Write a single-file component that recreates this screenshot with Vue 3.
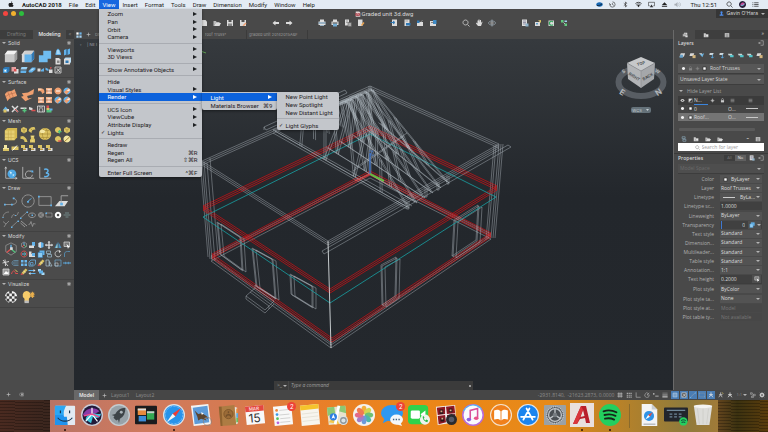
<script setup>
import { h, ref } from 'vue'

/* Small glyphs: each is a list of [path, fill, stroke, stroke width] on a 16 x 16 grid. */
const W = '#dcdcdc', G = '#a9a9a9', B = '#62b2ea', D = '#2f78b4', O = '#f0a070', Y = '#dcc463', L = '#f3e6a2', R = '#dc5050', N = '#54c27c', C = '#54c6cc', K = '#3a3a3a'
const glyphs = {
  box: [['M4 2h11v9l-3 4H1V6z', '#c8c8c8'], ['M4 2h11l-3 4H1z', '#f2f2f2'], ['M15 2v9l-3 4V6z', '#9c9c9c']],
  boxBlue: [['M4 2h11v9l-3 4H1V6z', '#dadada'], ['M4 6h8v9H4z', B], ['M5 2h10l-3 4H3z', '#cfcfcf'], ['M15 2v9l-3 4V6z', D]],
  union: [['M6 2h9v9h-4v4H1V7h5z', '#6fbcf0']],
  cone: [['M5 4l3-3 3 3 3 7v3H3v-3z', B], ['M6 4h4l2 8H5z', '#a8d8f6']],
  slabs: [['M2 4l5-2v11l-5 2zM9 3l5-2v11l-5 2z', B], ['M7 2l2 1v11l-2 1z', D]],
  page: [['M3 2h7l3 3v10H3z', W], ['M6 7h5v5H6z', '#888']],
  shellBox: [['M2 4h12v11H2z', W], ['M5 7h6v5H5z', D], ['M2 4l3-3h11v9l-2 3V4z', '#b9dcf2']],
  cubeBlue: [['M2 5l4-3h9v8l-4 4H2z', D], ['M3 6h7v7H3z', B], ['M5 8h3v3H5z', '#fff']],
  subtract: [['M1 2h9v9H1z', '#e4a0a0'], ['M6 6h9v9H6z', W], ['M6 6h5v5H6z', R]],
  slice: [['M3 2h12l-2 5H1z', '#9bd2f5'], ['M1 9h12l-1 5H1z', B]],
  wedge: [['M1 10l7-7h7v4l-7 6H2z', B], ['M4 9l5-4h4l-5 4z', '#bfe3f8']],
  mix: [['M1 5h6v6H1z', W], ['M8 8l6-4v7h-6z', B]],
  mixRed: [['M1 3l6 3v4L1 8z', B], ['M8 7h7v7H8z', W], ['M10 2l4 1-3 4z', R]],
  cut: [['M2 2h12v12H2z', '#555', W, 1.5], ['M4 13L13 4M6 5l6 7', 'none', W, 2]],
  patch: [['M1 7C4 2 8 5 12 1l3 8c-5 2-8 1-11 6z', O], ['M4 4l4 9M8 4l3 7M2 10c4-4 7-3 12-5', 'none', '#b5694a', 0.7]],
  planar: [['M1 6l7-1 7-4-1 6-7 2 1 3 5-1-8 4-5-5 3-1z', O]],
  arcO: [['M2 3h7c4 0 6 3 6 8l-5 3c0-4-2-6-5-6l-3 1z', O], ['M2 3h7v3H2z', '#f8cfae']],
  boxO: [['M2 2h12v12H2z', '#f3b48c'], ['M5 5h6v6H5z', '#fff'], ['M2 7h12v2H2z', '#bb6a43']],
  ballO: [['M8 1a7 7 0 1 0 .1 0z', O], ['M4 8h8', 'none', '#fff', 2]],
  ballMix: [['M8 1a7 7 0 1 0 .1 0z', B], ['M2 10l9-8 4 4-8 9z', O], ['M7 7l6-3v4z', '#fff']],
  tools: [['M2 2l12 12M14 2L2 14', 'none', W, 3], ['M8 8l6 6', 'none', R, 2]],
  plusN: [['M1 5h12v3H1z', W], ['M9 7v8M5 11h8', 'none', N, 3]],
  minusR: [['M2 4l7 2v5l-7-2z', W], ['M7 11h8', 'none', R, 3]],
  grid: [['M1 2h14v12H1z', '#555', W, 1.6], ['M5 2c4 5-3 7 0 12M11 2c-4 5 3 7 0 12', 'none', W, 1.6]],
  hue: [['M3 1h5v5H3z', R], ['M3 6h6v4H3z', Y], ['M3 10h10v5H3z', N], ['M9 7h6v4H9z', B]],
  gearBall: [['M1 11l6-8 7 8z', B], ['M3 9h6v6H3z', Y], ['M9 8h5v5H9z', W]],
  meshBox: [['M1 4l3-3h11v11l-3 3H1z', '#d3b74f'], ['M1 4h11v11H1z', '#e6cf72'], ['M1 8h11M1 12h11M5 4v11M8 4v11', 'none', '#c4a748', 0.6]],
  meshSmall: [['M2 5l5-3 7 3v6l-6 4-6-4z', Y], ['M8 8v6M3 5l5 3 5-3', 'none', '#8f7630', 1]],
  meshArc: [['M1 10C2 4 7 1 13 2l2 5c-6 0-8 2-8 7z', Y], ['M5 5l5 5', 'none', '#8f7630', 1]],
  meshFan: [['M1 3l5-1c3 1 8 6 9 12H9C9 9 6 7 1 8z', Y]],
  meshTube: [['M5 1h8l-1 5 2 3v6H4v-5l2-3z', Y], ['M7 3h4M7 12h4', 'none', L, 1.5]],
  meshBall: [['M8 1a7 7 0 1 0 .1 0z', '#dcc260'], ['M8 1c-4 3-4 11 0 14M8 1c4 3 4 11 0 14M1 8h14M3 4h10M3 12h10', 'none', '#9c8132', 0.6], ['M5 3a3 2 0 1 0 .1 0z', L]],
  ballPlus: [['M8 2a6 6 0 1 0 .1 0z', Y], ['M11 8v7M8 11h7', 'none', N, 2.5]],
  ballMinus: [['M8 2a6 6 0 1 0 .1 0z', Y], ['M8 12h7', 'none', R, 2.5]],
  ballPen: [['M8 1a7 7 0 1 0 .1 0z', L], ['M3 13L13 4', 'none', '#a08638', 2]],
  meshUp: [['M4 2h6v6h4v6H2V8h2z', L], ['M2 10h12v4H2z', Y]],
  meshTrim: [['M1 5h14v7H1z', Y], ['M3 13L12 3', 'none', '#fff', 2]],
  meshStep: [['M2 2h8v6H2z', Y], ['M6 8h9v6H6z', W], ['M6 9h6v3H6z', '#c29d40']],
  ucsWorld: [['M2 1v13h13', 'none', '#b8b8b8', 1], ['M1 3l1-2 1 2M13 13l2 1-2 1', 'none', '#d8d8d8', 0.8], ['M9 4a5 5 0 1 0 .1 0z', '#4fa8e4'], ['M6 6l3 1-1 3zM10 9l2 1-2 2z', '#d5edf8']],
  ucsTurn: [['M2 1v13h13', 'none', '#b8b8b8', 1], ['M12 7a4 4 0 1 0 1 3', 'none', '#b8b8b8', 1], ['M10 5h4v3z', B]],
  ucsThree: [['M2 1v13h13', 'none', '#b8b8b8', 1], ['M7 4c5-2 6 3 2 4 5 0 4 5-2 4', 'none', B, 1.7]],
  pline: [['M1 12h9c6-1 5-6 1-7', 'none', '#9a9a9a', 1], ['M0 11h2v2H0zM8 11h2v2H8zM10 4h2v2h-2z', B]],
  circle: [['M8 1a7 7 0 1 0 .1 0z', 'none', '#999', 1], ['M7 9l5-4', 'none', B, 1], ['M7 8h2v2H7z', B]],
  rect: [['M1 3h14v10H1z', 'none', '#999', 1], ['M0 2h2v2H0zM14 12h2v2h-2z', B]],
  plane: [['M5 8h10l-4 6H0z', W], ['M7 2v9M7 2h8', 'none', '#aaa', 1], ['M6 10h3v3H6z', B]],
  arc: [['M2 14C2 6 7 2 14 2', 'none', G, 1.2], ['M1 12h2v2H1z', B]],
  spline: [['M1 14C5-3 9 20 15 2', 'none', G, 1.2], ['M8 8h2v2H8z', B]],
  line: [['M1 14L14 2', 'none', G, 1.2], ['M0 13h3v3H0zM13 1h3v3h-3z', B]],
  ellipse: [['M8 4c9 0 9 9 0 9S-1 4 8 4z', 'none', G, 1.5], ['M7 7h3v3H7z', B]],
  hatch: [['M8 2a6 6 0 1 0 .1 0z', '#8a8a8a'], ['M4 5l8 8M4 11l7-7', 'none', '#444', 1]],
  rectS: [['M2 4h12v8H2z', 'none', G, 1.2], ['M1 3h3v3H1z', B]],
  donut: [['M8 3.500a4.500 4.500 0 1 0 .1 0z', 'none', '#fff', 4]],
  divide: [['M1 8h14M4 4h8M5 12h6', 'none', '#8aa', 1.3]],
  angle: [['M2 3l6 5 6-6M8 8l-4 6', 'none', G, 1.2]],
  parallel: [['M2 2l12 10M1 6l9 8', 'none', G, 1.6]],
  zig: [['M1 9l3-1 2-5 3 10 2-6 4 1', 'none', G, 1.3]],
  gizmo: [['M8 1l6 3v7l-6 4-6-4V4z', 'none', '#8d8d8d', 1], ['M8 8V3', 'none', B, 1.6], ['M8 8l-5 4', 'none', R, 1.6], ['M8 8l5 4', 'none', N, 1.6], ['M7 6h3v3H7z', '#ddd']],
  gizmoR: [['M8 2l5 3v6l-5 3-5-3V5z', 'none', '#bbb', 1], ['M8 8V3', 'none', B, 2], ['M8 8l-4 4', 'none', R, 2], ['M8 8l4 4', 'none', N, 2]],
  rotate3: [['M8 2a6 6 0 1 0 .1 0z', 'none', R, 1.8], ['M8 4c4 2 4 6 0 8', 'none', N, 1.6], ['M4 8h8', 'none', B, 2]],
  alignTop: [['M8 2h6v8H8z', B], ['M2 9h10v5H2z', W]],
  drum: [['M3 4l5-2 5 2v8l-5 2-5-2z', B], ['M3 4l5-2v12l-5-2z', W]],
  move: [['M8 1v14M1 8h14', 'none', W, 2.5], ['M8 0l3 3H5zM8 16l3-3H5zM0 8l3-3v6zM16 8l-3-3v6z', W]],
  mirror: [['M7 2v12H1zM9 2l6 12H9z', '#4b90c0'], ['M7 5v9H3z', '#9cc']],
  mouse: [['M2 2h11v9H2z', '#777', W, 1.4], ['M7 6l7 6-3 1-1 3z', '#fff']],
  fillet: [['M2 3h5v5h7v6H2z', W], ['M8 6h6v6H8z', B]],
  copyBlue: [['M5 1h10v9H5z', B], ['M2 5h9v10H2z', '#8fccf2', D, 1]],
  copy: [['M3 2h8v5H3zM5 9h8v5H5z', 'none', '#9bbfd4', 1.4]],
  spin: [['M12 3a6 6 0 1 0 2 6', 'none', W, 1.5], ['M10 0l4 3-4 3z', W]],
  corner: [['M3 14V8c0-3 2-5 6-5h5', 'none', '#5796bf', 1.6]],
  trim: [['M2 2l10 12M6 1l1 13M1 8l13-3', 'none', W, 1.8]],
  offset: [['M15 3H8C0 3 0 13 8 13h7M15 6H8c-4 0-4 4 0 4h7', 'none', '#6c9dbd', 1.4]],
  array: [['M2 2h5v5H2zM9 2h5v5H9zM2 9h5v5H2zM9 9h5v5H9z', '#6db8ec']],
  array3: [['M2 6l4-4h9v8l-4 4H2z', 'none', '#69aee0', 1.6], ['M5 7h5v5H5z', 'none', '#69aee0', 1.4]],
  pencil: [['M3 10l8-9 4 3-8 9z', Y], ['M1 14l2-4 4 3z', R], ['M7 6l4 3', 'none', '#fff', 1]],
  stretch: [['M2 2h6v12H2zM9 5l5 9H9z', 'none', '#a9c4d3', 1.4]],
  scale: [['M2 2h12v12H2z', 'none', '#6ba8cf', 1.4], ['M2 8h6v6H2z', 'none', '#ccc', 1.2]],
  join: [['M0 8h6M10 8h6', 'none', '#5ba8dd', 2], ['M5 5l3 3-3 3zM11 5L8 8l3 3z', B]],
  photo: [['M2 2h12v12H2z', '#999', W, 1.5], ['M4 11l4-5 3 3 2-2v5H4z', '#fff']],
  wave: [['M1 12C3 4 8 4 9 11h5', 'none', R, 2], ['M8 3l5 5', 'none', Y, 2]],
  swap: [['M1 5h11M4 11h11', 'none', B, 2], ['M11 2l4 3-4 3zM5 8l-4 3 4 3z', W]],
  pair: [['M2 2h6v5H2zM9 9h6v5H9z', '#aadcf8'], ['M4 5h8v6H4z', B]],
  checker: [['M8 1a7 7 0 1 0 .1 0z', '#f5f5f5'], ['M6 1h3v3H6zM3 4h3v3H3zM9 4h3v3H9zM6 7h3v3H6zM12 7h3v3h-3zM1 7h2v3H1zM3 10h3v3H3zM9 10h3v3H9zM6 13h3v2H6z', '#3f3f3f']],
  bulb: [['M6 1a5 5 0 0 1 3 9v3H4v-3A5 5 0 0 1 6 1z', '#f6cb6a'], ['M4 12h5v3H4z', '#bdbdbd'], ['M13 2v7M9.500 5.500h6M11 3l4 5M15 3l-4 5', 'none', '#eab04c', 1.2]],

  fileNew: [['M4 2h7l3 3v9H4z', W]],
  open: [['M1 4h5l1 2h6v2H5l-3 6H1z', '#bbb'], ['M5 8h11l-3 6H2z', W]],
  save: [['M2 2h12v12H2z', W], ['M5 2h6v4H5z', '#555'], ['M4 9h8v5H4z', '#888']],
  saveAs: [['M2 2h12v12H2z', W], ['M5 2h6v4H5z', '#555'], ['M7 13l6-6 2 2-5 5z', O]],
  undo: [['M1 8l6-5v3h7v4H7v3z', W]],
  redo: [['M15 8L9 3v3H2v4h7v3z', W]],
  print: [['M4 1h8v4H4zM1 5h14v7H1zM4 9h8v5H4z', '#dedede'], ['M1 7h14v2H1zM4 12h8v1H4z', '#5583a8']],
  printB: [['M4 1h8v4H4zM1 5h14v7H1z', '#dedede'], ['M4 9h8v6H4z', '#72acd4'], ['M3 7h10v2H3z', '#444']],
  sheet: [['M2 1h8v12H2z', W], ['M4 4h4M4 7h4', 'none', '#666', 1], ['M8 7h7v8H8z', '#aaa', '#555', 1]],
  sheetPen: [['M2 1h9v13H2z', W], ['M8 12l5-6 2 2-5 6z', '#f0a44c']],
  importA: [['M4 1h10v13H4z', W], ['M1 7h7M6 4l4 3-4 3', 'none', D, 2]],
  importB: [['M3 1h10v13H3z', W], ['M6 8h9v5H6z', D], ['M5 4h5', 'none', '#777', 1]],
  importC: [['M2 6h12v8H2z', W], ['M2 3h5v5H2z', D], ['M9 6l4-3', 'none', W, 1]],
  importD: [['M2 4h12v10H2z', W], ['M8 2h7v8H8z', '#3f8cc7'], ['M4 7h5', 'none', '#666', 1.5]],
  zoom: [['M7 2a5 5 0 1 0 .1 0zM11 11l4 4', 'none', '#ccc', 1.7]],
  hand: [['M3 7l2 2V3h2v4V1h2v6l1-5h2v6l2-3 1 1-3 8H6L2 9z', W]],
  orbit: [['M8 4v8M4 8h8', 'none', '#ccc', 1.2], ['M8 4c9 0 9 8 0 8S-1 4 8 4zM8 1v3M8 12v3', 'none', '#a8b8c4', 1.4]],
  prop: [['M2 1h10v13H2z', W], ['M4 4h6M4 7h6M4 10h6', 'none', '#668', 1.2], ['M9 9h6v6H9z', '#90b4cc']],
  blocks: [['M2 6h10v8H2z', W], ['M8 3l6-1v6z', Y], ['M4 8h4v3H4z', '#5f9fc8']],
  refresh: [['M3 3h11v11H3z', W], ['M12 6a4 4 0 1 0 0 5', 'none', '#38a860', 2.4]],
  link: [['M2 2h5v5H2zM9 9h5v5H9z', '#63cb80'], ['M9 3h5v3H9z', '#9fd1ef'], ['M7 7l3 3', 'none', W, 1.5]],

  layer: [['M4 3h10l-3 8H1z', '#d8d8d8'], ['M3 6h6v7H1z', '#66a0c8']],
  layerY: [['M3 3h9l-2 6H1z', '#d8d8d8'], ['M8 7h7v7H8z', '#d2b47c']],
  layerB: [['M2 3l5 2 7-2-4 9z', '#6ab0dc'], ['M2 3h7v3z', '#ddd']],
  layerD: [['M4 2h9l-2 5H3z', '#d0d8dc'], ['M10 6v8M7 11l3 3 3-3', 'none', '#58a8e0', 2]],
  layerC: [['M2 4h9l2 4H4z', '#c8d4d6'], ['M7 7h8v5H7z', C]],
  stack: [['M5 2h9v7H5z', '#ddd'], ['M2 5h9v7H2z', '#bbb', '#555', 1], ['M9 9h6v5H9z', '#ddd']],
  folder: [['M2 3h5l1 2h6v9H2z', '#ccc'], ['M8 7h6v6H8z', '#fff', '#555', 1]],
  list: [['M2 3h12v11H2z', '#ccc'], ['M4 6h8M4 9h8M4 12h8', 'none', '#444', 1]],
  out: [['M7 2h7v12H7M1 8h8M5 5L2 8l3 3', 'none', '#ccc', 1.4]],
  eye: [['M1 8c4-6 10-6 14 0-4 6-10 6-14 0z', '#ccc'], ['M8 6a2 2 0 1 0 .1 0z', '#444']],
  lock: [['M3 7h10v7H3z', '#ccc'], ['M5 7V4c0-3 6-3 6 0v3', 'none', '#ccc', 1.6]],
  sun: [['M8 4a4 4 0 1 0 .1 0z', '#bbb'], ['M8 1v14M1 8h14', 'none', '#bbb', 1]],
  half: [['M2 2h12v12H2z', '#ddd'], ['M14 2v12H2z', '#444']],
  bars: [['M2 4h12M2 8h12M2 12h12', 'none', '#bbb', 1.5]],
  dot: [['M8 3a5 5 0 1 0 .1 0z', '#f0f0f0']],
  swatch: [['M3 3h10v10H3z', '#fff', '#222', 2]],
  gear: [['M8 4a4 4 0 1 0 .1 0z', 'none', '#d0d0d0', 3], ['M8 0v16M0 8h16M2 2l12 12M14 2L2 14', 'none', '#d0d0d0', 1.4], ['M8 6a2 2 0 1 0 .1 0z', '#555']],

  gridLines: [['M1 5h14M1 11h14M5 1v14M11 1v14', 'none', '#ccc', 1.8]],
  gridDots: [['M2 2h3v3H2zM7 2h3v3H7zM12 2h3v3h-3zM2 7h3v3H2zM7 7h3v3H7zM12 7h3v3h-3zM2 12h3v3H2zM7 12h3v3H7zM12 12h3v3h-3z', '#bbb']],
  ortho: [['M3 1v13h12', 'none', '#bbb', 1.6]],
  polar: [['M12 4a6 6 0 1 0 2 5M8 8l6-6M8 8h7', 'none', '#bbb', 1.5]],
  dyn: [['M2 3v4M0 5h4M6 11h9', 'none', '#ccc', 2]],
  weight: [['M1 3h14', 'none', '#ccc', 1], ['M1 8h14', 'none', '#ccc', 2], ['M1 13h14', 'none', '#ccc', 3]],
  person: [['M8 1v6l-5 7M8 7l5 7M3 7h10', 'none', '#e6e6e6', 2]],
  personY: [['M7 1v6l-5 7M7 7l4 7M3 7h9', 'none', '#ccc', 2], ['M11 1l3 4', 'none', Y, 2]],
  bars3d: [['M3 3h10v10H3z', 'none', '#d8e8f5', 1.5], ['M3 8h10M8 3v10', 'none', '#d8e8f5', 1]],
  flow: [['M1 2h5v4H1zM9 6h5v4H9zM4 11h5v4H4z', 'none', '#bbb', 1.4], ['M6 4l3 3-3 5', 'none', '#bbb', 1]],
  plus: [['M8 2v12M2 8h12', 'none', '#c4c4c4', 2]],
  tagIcon: [['M5 3h9v10H5L1 8z', 'none', '#bbb', 1.4], ['M7 5h5v6H7z', '#bbb']],
  tiles: [['M1 1h6v6H1z', '#fff'], ['M9 1h6v6H9z', '#6fb5e8'], ['M1 9h6v6H1zM9 9h6v6H9z', '#a8d2f0']],

  apple: [['M11 1c0 2-1 3-3 3 0-2 1-3 3-3zM8 5c2-1 4-1 6 1-3 2-2 5 1 6-1 2-2 4-4 4l-3-1-3 1C1 14 0 6 4 5z', '#1d1d20']],
  planet: [['M8 3c10 0 10 10 0 10S-2 3 8 3z', '#1568b4'], ['M2 10c4 1 9 0 12-4', 'none', '#123', 2]],
  clock: [['M8 2a6 6 0 1 1-6 7M1 5l1 4 3-2M8 5v3l3 2', 'none', '#333', 1.4]],
  blue: [['M4 5l7 6-3 3V2l3 3-7 6', 'none', '#333', 1.4]],
  wifi: [['M8 14L5 10c2-1 4-1 6 0z', '#222'], ['M1 6c4-4 10-4 14 0M3 9c3-3 7-3 10 0', 'none', '#222', 1.8]],
  airplay: [['M4 11H1V3h14v8h-3', 'none', '#333', 1.4], ['M8 8l4 6H4z', '#333']],
  eject: [['M8 3l6 6H2zM2 11h12v2H2z', '#222']],
  sound: [['M1 6h3l4-4v12l-4-4H1z', '#a8aeb5'], ['M10 5c2 2 2 4 0 6M12 3c4 3 4 7 0 10', 'none', '#a8aeb5', 1.4]],
  search: [['M7 2a5 5 0 1 0 .1 0zM11 11l4 4', 'none', '#333', 1.6]],
  siri: [['M8 0a8 8 0 1 0 .1 0z', '#28203a'], ['M3 10c2-8 8-8 10-3-2 4-6 5-10 3z', '#cc4a9c'], ['M4 9c3 3 7 0 9-3', 'none', '#58d6e8', 2]],
  menuList: [['M1 4h2M1 8h2M1 12h2M5 4h10M5 8h10M5 12h10', 'none', '#222', 1.6]],
  user: [['M8 1a3.500 3.500 0 1 0 .1 0zM6 8h4v3h4v4H2v-4h4z', '#4d8ef0']],
  dwg: [['M2 1h9l3 3v11H2z', '#e6d6d6'], ['M1 6h12v7H1z', '#a83a44'], ['M3 12l4-5 4 5', 'none', '#fff', 1.2]]
}
const Ico = (p) =>
  h('svg', { viewBox: '0 0 16 16', 'aria-hidden': 'true' },
    (glyphs[p.n] || []).map(([d, f, s, w]) => h('path', { d, fill: f, stroke: s || 'none', 'stroke-width': w || 0 })))
Ico.props = ['n']

const menusLeft = ['File', 'Edit']
const menusRight = ['Insert', 'Format', 'Tools', 'Draw', 'Dimension', 'Modify', 'Window', 'Help']
const trayA = ['planet', 'clock', 'blue', 'wifi', 'airplay', 'eject', 'sound']
const trayB = ['search', 'siri', 'menuList']

const viewMenu = [
  { t: 'Zoom', sub: 1 }, { t: 'Pan', sub: 1 }, { t: 'Orbit', sub: 1 }, { t: 'Camera', sub: 1 }, null,
  { t: 'Viewports', sub: 1 }, { t: '3D Views', sub: 1 }, null,
  { t: 'Show Annotative Objects', sub: 1 }, null,
  { t: 'Hide' }, { t: 'Visual Styles', sub: 1 }, { t: 'Render', sub: 1, open: 1 }, null,
  { t: 'UCS Icon', sub: 1 }, { t: 'ViewCube', sub: 1 }, { t: 'Attribute Display', sub: 1 }, { t: 'Lights', on: 1 }, null,
  { t: 'Redraw' }, { t: 'Regen', key: '⌘R' }, { t: 'Regen All', key: '⇧⌘R' }, null,
  { t: 'Enter Full Screen', key: '^⌘F' }
]
const lightMenu = [{ t: 'New Point Light' }, { t: 'New Spotlight' }, { t: 'New Distant Light' }, null, { t: 'Light Glyphs', on: 1 }]

const toolbar = [
  ['fileNew', 'open', 'save', 'saveAs'], ['undo', 'redo'], ['print', 'printB', 'sheet', 'sheetPen'],
  ['importA', 'importB', 'importC', 'importD'], ['zoom', 'hand', 'orbit'], ['prop', 'blocks', 'refresh', 'link']
]

/* A leading * marks a tool that takes two columns and two rows. */
const palettes = [
  { t: 'Solid', i: '*box *boxBlue *union cone slabs page shellBox cubeBlue subtract slice wedge mix mixRed cut' },
  { t: 'Surface', i: '*patch *planar arcO boxO ballO ballMix boxO boxO ballMix ballMix gearBall tools plusN minusR grid hue' },
  { t: 'Mesh', i: '*meshBox meshSmall meshArc *meshBall ballPlus meshSmall meshFan meshTube ballMinus ballPen meshUp meshTrim meshStep meshStep meshStep meshStep' },
  { t: 'UCS', i: '*ucsWorld *ucsTurn *ucsThree', short: 1 },
  { t: 'Draw', i: '*pline *circle *rect *plane arc spline line ellipse hatch rectS donut divide angle line parallel zig' },
  { t: 'Modify', i: '*gizmo gizmoR alignTop drum move mirror mouse rotate3 fillet copyBlue copy spin corner trim offset array array3 pencil stretch scale join photo wave pencil swap pair' },
  { t: 'Visualize', i: '*checker *bulb', short: 1 }
].map(p => ({ ...p, i: p.i.split(' ').map(n => ({ n: n.replace('*', ''), big: n[0] === '*' })) }))

const layerTools = ['layer', 'layerY', 'layerB', 'layerD', 'layerD', 'layerC', 'layerC', 'layerC', 'layerY']
const props = [
  ['Color', 'ByLayer', 'sel', 'swatch'], ['Layer', 'Roof Trusses', 'sel'], ['Linetype', 'ByLa...', 'sel', 'line'],
  ['Linetype sc...', '1.0000', 'txt'], ['Lineweight', 'ByLayer', 'sel'], ['Transparency', '0', 'slide'],
  ['Text style', 'Standard', 'sel'], ['Dimension...', 'Standard', 'sel'], ['Multileader...', 'Standard', 'sel'],
  ['Table style', 'Standard', 'sel'], ['Annotation...', '1:1', 'sel'], ['Text height', '0.2000', 'pick'],
  ['Plot style', 'ByColor', 'sel'], ['Plot style ta...', 'None', 'sel'], ['Plot style at...', 'Model', 'off'],
  ['Plot table ty...', 'Not available', 'off']
]
const statusIcons = ['gridLines', 'gridDots', 'ortho', 'polar', 'dyn', 'weight']
const statusOn = ['bars3d', 'cut', 'line', 'rect', 'person']
const command = ref('')
const search = ref('')

/* Wireframe: every edge is [x1, y1, x2, y2]; fan() repeats it at each offset. */
const fan = (edges, offs) => edges.flatMap(([a, b, c, d]) => offs.map(([x, y]) => `M${a + x} ${b + y}L${c + x} ${d + y}`)).join('')
const quad = (a, b, c, d) => [[...a, ...b], [...b, ...c], [...c, ...d], [...d, ...a]]
const topRing = quad([202, 161], [370, 86], [499, 144], [328, 241])
const baseRing = quad([211, 256], [370, 173], [491, 234], [331, 343])
const wallTop = fan(topRing, [[0, 0], [0, 2], [0, 4]])
const wallBase = fan(baseRing, [[0, 0], [0, 2], [0, 5]])
const posts = fan([[202, 161, 210, 259]], [[0, 0], [2, 1], [5, 2], [8, -3], [-2, -2]]) +
  fan([[499, 144, 491, 238]], [[0, 0], [2, 0], [4, 0], [-3, 1], [-5, 2]]) +
  fan([[370, 86, 370, 175]], [[-1, 0], [1, 0]])
const frontPost = 'M328 241L331 348'
const redMid = fan(quad([203, 206], [370, 126], [497, 186], [330, 289]), [[0, 0], [0, 2], [0, 4]])
const redBase = fan(quad([212, 254], [370, 171], [491, 233], [332, 338]), [[0, 0], [0, 2], [0, 4]])
const cyan = 'M203 217L370 134L496 197L330 303Z'
const openings = [
  quad([218, 223], [241, 238], [243, 271], [221, 255]), quad([253, 249], [273, 260], [276, 299], [257, 287]),
  quad([291, 275], [313, 287], [313, 308], [292, 295]), quad([382, 266], [397, 258], [396, 297], [383, 306]),
  quad([455, 221], [479, 206], [477, 241], [453, 257])
].map(q => fan(q, [[0, 0], [3, 1], [-1, -1]])).join('')
const trusses = [0, 1, 2, 3, 4, 5].map(k => {
  const f = k / 5
  const l = [273 + 76 * f, 130 - 33 * f], r = [407 + 40 * f, 207 - 25 * f], a = [346 + 25 * f, 101 - 12 * f]
  const on = (p, q, t) => [p[0] + (q[0] - p[0]) * t, p[1] + (q[1] - p[1]) * t]
  const e = [[...on(l, r, k ? 0.3 : 0), ...r], [...l, ...a], [...a, ...r]]
  const pts = [[l, a, 0.4, l, r, 0.2], [l, a, 0.7, l, r, 0.38], [a, r, 0, l, r, 0.38], [a, r, 0, l, r, 0.6], [a, r, 0.3, l, r, 0.6], [a, r, 0.55, l, r, 0.8]]
  pts.forEach(([p, q, t, m, n, u]) => e.push([...on(p, q, t), ...on(m, n, u)]))
  return fan(e, [[0, 0], [2, 1]])
}).join('')
const eaves = 'M322 251L508 145L511 147L324 254ZM264 127L345 90L347 93L266 130ZM264 127v3M273 133L407 209M278 131L412 206' +
  'M355 168L407 133M353 171L404 136M407 201v8h2v-8M425 189v8h2v-8M437 182v8h2v-8M447 176v8h2v-8'
const steps = 'M246 296L255 288L274 301L265 310ZM246 296v3L265 313L274 304M250 292L269 306v3M255 288v-3L276 299'
</script>

<template>
  <div class="desk">
    <header class="menubar">
      <Ico n="apple" class="m-apple" />
      <nav class="menus" aria-label="Main menu">
        <button class="m app">AutoCAD 2018</button>
        <button v-for="m in menusLeft" :key="m" class="m">{{ m }}</button>
        <div class="m-open">
          <button class="m on">View</button>
          <ul class="menu view">
            <li v-for="(e, i) in viewMenu" :key="i" :class="{ sep: !e, hot: e && e.open }">
              <button v-if="e" class="mi">
                <span class="tick">{{ e.on ? '✓' : '' }}</span><span class="lab">{{ e.t }}</span>
                <span class="key">{{ e.key }}</span><i v-if="e.sub" class="arr"></i>
              </button>
              <ul v-if="e && e.open" class="menu render">
                <li class="hot">
                  <button class="mi"><span class="tick"></span><span class="lab">Light</span><i class="arr"></i></button>
                  <ul class="menu light">
                    <li v-for="(s, j) in lightMenu" :key="j" :class="{ sep: !s }">
                      <button v-if="s" class="mi"><span class="tick">{{ s.on ? '✓' : '' }}</span><span class="lab">{{ s.t }}</span></button>
                    </li>
                  </ul>
                </li>
                <li><button class="mi"><span class="tick"></span><span class="lab">Materials Browser</span><span class="key">⌘9</span></button></li>
              </ul>
            </li>
          </ul>
        </div>
        <button v-for="m in menusRight" :key="m" class="m">{{ m }}</button>
      </nav>
      <div class="tray">
        <Ico v-for="n in trayA" :key="n" :n="n" />
        <span class="time">Thu 12:51</span>
        <Ico v-for="n in trayB" :key="n" :n="n" />
      </div>
    </header>

    <div class="window">
      <div class="chrome">
        <div class="titlerow">
          <div class="lights"><button class="red" aria-label="Close"></button><button class="amber" aria-label="Minimise"></button><button class="green" aria-label="Zoom"></button></div>
          <h1><Ico n="dwg" />Graded unit 3d.dwg</h1>
          <button class="user"><Ico n="user" />Gavin O'Hara<i class="down"></i></button>
        </div>
        <div class="toolbar">
          <div v-for="(g, i) in toolbar" :key="i" class="group">
            <button v-for="n in g" :key="n" :aria-label="n"><Ico :n="n" /></button>
          </div>
        </div>
      </div>

      <div class="work">
        <aside class="tools">
          <div class="tooltabs"><button>Drafting</button><button class="on">Modeling</button><button class="fold">«</button></div>
          <section v-for="p in palettes" :key="p.t" class="palette" :class="{ short: p.short }">
            <h2><i class="down"></i>{{ p.t }}<Ico n="gear" /></h2>
            <div class="cells">
              <button v-for="(c, i) in p.i" :key="i" :class="{ big: c.big }" :aria-label="c.n"><Ico :n="c.n" /></button>
            </div>
          </section>
          <div class="toolfoot"><Ico n="plus" /><Ico n="tagIcon" /></div>
        </aside>

        <div class="center">
          <div class="upper">
            <main class="stage">
              <div class="doctabs">
                <Ico n="tiles" /><Ico n="plus" />
                <button class="t1">Dr</button><button class="t2">roof Truss*</button><button class="t3">graded unit 20142015ABF</button>
              </div>
              <div class="canvas">
                <svg class="model" viewBox="74 39 599 351" role="img" aria-label="House wireframe">
                  <text x="80" y="46" class="vp">▫</text><text x="87" y="46" class="vp">| NE I</text>
                  <path d="M195 49L206 53" stroke="#5a9a50" />
                  <g fill="none">
                    <path class="w" :d="wallTop + wallBase + posts" />
                    <path class="r" :d="redMid + redBase" />
                    <path class="w" :d="openings + steps" />
                    <path class="c" :d="cyan" />
                    <path class="w t" :d="trusses + eaves" />
                    <path class="f" :d="frontPost" />
                    <path d="M370 175V153" stroke="#3f74c8" stroke-width="1.400" />
                    <path d="M370 174L384 181" stroke="#58c83c" stroke-width="1.600" />
                    <path d="M370 174L355 181" stroke="#d84848" stroke-width="1.200" />
                    <path d="M369 151h4l-3 4h4" stroke="#3f74c8" stroke-width=".8" />
                  </g>
                  <g class="cube">
                    <ellipse cx="641" cy="82" rx="22.500" ry="14" fill="none" stroke="#585d63" stroke-width="6" />
                    <path d="M641 57L655 63L641 71L627 63Z" fill="#c6c8ca" />
                    <path d="M627 63L641 71V88L628 79Z" fill="#b2b4b7" />
                    <path d="M655 63L641 71V88L654 79Z" fill="#a5a7aa" />
                    <path d="M627 63L641 71L655 63M641 71V88" stroke="#8a8c8f" stroke-width=".6" fill="none" />
                    <text x="641" y="65" transform="rotate(-14 641 64)" class="face">TOP</text>
                    <text x="634" y="78" transform="rotate(32 634 77)" class="face">RIGHT</text>
                    <text x="648" y="78" transform="rotate(-30 648 77)" class="face">BACK</text>
                    <text x="622" y="95" transform="rotate(32 622 93)" class="dir">E</text>
                    <text x="659" y="95" transform="rotate(-34 659 93)" class="dir">N</text>
                    <text x="624" y="73" transform="rotate(-30 624 72)" class="dir s">S</text>
                    <text x="657" y="73" transform="rotate(30 657 72)" class="dir s">W</text>
                    <rect x="631" y="107" width="20" height="6" rx="2" fill="#65727a" />
                    <text x="637" y="112" class="wcs">WCS</text>
                    <path d="M646 109h3l-1.500 2z" fill="#c5ced3" />
                  </g>
                </svg>
                <label class="cmd"><span>&gt;_<i class="down"></i></span><input v-model="command" placeholder="Type a command"><i class="dot"></i></label>
              </div>
            </main>

            <aside class="side">
              <div class="sidetabs"><button class="on"><Ico n="stack" /></button><button><Ico n="folder" /></button><button><Ico n="list" /></button><span>»</span></div>
              <div class="sidebody">
                <h2>Layers<Ico n="out" /></h2>
                <div class="ltools"><Ico v-for="(n, i) in layerTools" :key="i" :n="n" /></div>
                <div class="pick lay"><Ico n="dot" /><Ico n="lock" class="dim" /><Ico n="sun" class="dim" /><Ico n="swatch" /><select aria-label="Current layer"><option>Roof Trusses</option></select><i class="down"></i></div>
                <div class="pick"><select aria-label="Layer state"><option>Unsaved Layer State</option></select><i class="down"></i></div>
                <button class="hide"><i class="down"></i>Hide Layer List</button>
                <table>
                  <colgroup><col class="c8"><col class="c8"><col class="c14"><col class="c10"><col class="c10"><col><col></colgroup>
                  <thead><tr><th><Ico n="eye" /></th><th><Ico n="half" /></th><th class="name">N...</th><th><Ico n="sun" /></th><th><Ico n="lock" /></th><th><Ico n="bars" /></th><th><Ico n="bars" /></th></tr></thead>
                  <tbody>
                    <tr><td><Ico n="dot" /></td><td><Ico n="swatch" /></td><td colspan="3">0</td><td>O...</td><td><hr></td></tr>
                    <tr class="sel"><td><Ico n="dot" /></td><td><Ico n="swatch" /></td><td colspan="3">Roof...</td><td>O...</td><td><hr></td></tr>
                  </tbody>
                </table>
                <div class="scroll"></div>
                <div class="lfoot"><Ico n="copy" /><Ico n="folder" /><Ico n="open" /><Ico n="open" /><span></span><b>–</b><Ico n="list" /></div>
                <label class="find"><Ico n="search" /><input v-model="search" placeholder="Search for layer"></label>
              </div>
              <div class="sidebody propbox">
                <h2>Properties<span class="seg"><button>All</button><button class="on">No</button></span><Ico n="prop" /><Ico n="out" /></h2>
                <div class="pick space"><select aria-label="Object type" disabled><option>Model Space</option></select><i class="down"></i></div>
                <div class="props">
                  <template v-for="([l, v, k, ic], i) in props" :key="l">
                    <label :for="'p' + i">{{ l }}</label>
                    <div class="val" :class="k">
                      <Ico v-if="ic === 'swatch'" n="swatch" /><hr v-if="ic === 'line'">
                      <select v-if="k === 'sel'" :id="'p' + i"><option>{{ v }}</option></select>
                      <input v-else :id="'p' + i" :value="v" :disabled="k === 'off'">
                      <i v-if="k === 'sel'" class="down"></i>
                      <span v-if="k === 'slide'" class="end"><Ico n="copyBlue" /><i class="down"></i></span>
                      <span v-if="k === 'pick'" class="end"><Ico n="mouse" /></span>
                    </div>
                  </template>
                </div>
              </div>
            </aside>
          </div>

          <footer class="status">
            <button class="lt on">Model</button><Ico n="plus" /><button class="lt">Layout1</button><button class="lt">Layout2</button>
            <span class="coords">-2931.8140,&nbsp; -21623.2873, 0.0000</span>
            <div class="sicons">
              <Ico v-for="n in statusIcons" :key="n" :n="n" />
              <span v-for="n in statusOn" :key="n" class="lit"><Ico :n="n" /></span>
              <Ico n="personY" /><Ico n="person" /><span class="ratio">1:1<i class="down"></i></span><Ico n="flow" /><Ico n="gear" />
            </div>
          </footer>
        </div>
      </div>
    </div>

    <footer class="wall">
      <div class="dock">
        <button class="run" aria-label="Finder"><svg viewBox="0 0 24 24"><rect x="1" y="2" width="22" height="21" rx="1" fill="#e2eaf2" /><path d="M1 2h12c-3 6-3 8-2 12h3l1 9H1z" fill="#1f93ee" /><path d="M1 2h12c-2 4-3 8-2 10H1z" fill="#35b4f8" opacity=".6" /><path d="M7 7v3M17 7v3M4 15c4 5 12 5 16 0" fill="none" stroke="#17344f" stroke-width="1.300" /></svg></button>
        <button aria-label="Siri"><svg viewBox="0 0 24 24"><circle cx="12" cy="12" r="12" fill="#c9cdd8" /><circle cx="12" cy="12" r="10.500" fill="#221a3a" /><path d="M2 12C6 3 16 3 20 8c-4 3-12 6-18 4z" fill="#8a3ca8" /><path d="M5 17c1-5 4-6 8-7 4 0 7 2 9 0-1 6-6 6-9 4l-2 7z" fill="#3ec6dc" /><path d="M12 11l-7 8M12 11l6 8M12 11V4" stroke="#fff" stroke-width="1.300" /><path d="M3 13l9-2 8 3" stroke="#f04a8c" stroke-width="1.500" fill="none" /></svg></button>
        <button aria-label="Launchpad"><svg viewBox="0 0 24 24"><circle cx="12" cy="12" r="12" fill="#c3cbcf" /><circle cx="12" cy="12" r="10.500" fill="#98a2a8" /><path d="M19 4c-5 0-9 3-11 7l-4 1 3 1-1 2 3 3 2-1 1 4 1-5c4-2 6-6 6-12z" fill="#3d4448" /><circle cx="14.500" cy="9" r="1.600" fill="#aab3b8" /></svg></button>
        <button aria-label="Mission Control"><svg viewBox="0 0 24 24"><rect y="2" width="24" height="20" rx="1" fill="#1b1c1e" /><rect x="3" y="5" width="9" height="7" fill="#e88a3c" /><rect x="3" y="5" width="9" height="2" fill="#ddd" /><rect x="13" y="8" width="8" height="9" fill="#34a853" /><rect x="13" y="8" width="8" height="2" fill="#ccc" /><rect x="4" y="13" width="8" height="6" fill="#3c8cd8" /></svg></button>
        <button class="run" aria-label="Safari"><svg viewBox="0 0 24 24"><circle cx="12" cy="12" r="12" fill="#dfe4e8" /><circle cx="12" cy="12" r="10.700" fill="#2793ea" /><circle cx="12" cy="12" r="9.500" fill="none" stroke="#bfe0fa" stroke-width="1" stroke-dasharray=".6 1" /><path d="M20 4l-6.500 9.500-3-3z" fill="#f03c34" /><path d="M4 20l6.500-9.500 3 3z" fill="#f6f6f6" /></svg></button>
        <button aria-label="Mail"><svg viewBox="0 0 24 24"><path d="M1 2l19-2 3 22-19 2z" fill="#f3f4f4" /><path d="M3 4l16-2 2 18-16 2z" fill="#5d9bd8" /><path d="M5 7l4 4 4-1 5 3 2 3-4-1 2 3-6-2-3 2-1-4z" fill="#5b4530" /><path d="M12 9l3 1-2 2z" fill="#fff" /><circle cx="19" cy="19" r="4.500" fill="none" stroke="#8f8077" stroke-width="1" opacity=".8" /></svg></button>
        <button aria-label="Contacts"><svg viewBox="0 0 24 24"><path d="M19 3l3 1 1 17-4 2z" fill="#e8e4dc" /><path d="M21 5h2v5h-2z" fill="#e8883c" /><path d="M21 10h2v5h-2z" fill="#58a8e0" /><path d="M21 15h2v5h-2z" fill="#6cbc5c" /><path d="M2 3l17-2 2 22-17 1z" fill="#ad7c43" /><path d="M2 3l3 0 1 21H4z" fill="#8e6230" /><circle cx="12.500" cy="11" r="5" fill="#9b6b37" stroke="#80562a" /><path d="M10 14c0-3 5-3 5 0M12.500 8v2" stroke="#75502a" fill="none" stroke-width="1.500" /></svg></button>
        <button aria-label="Calendar"><svg viewBox="0 0 24 24"><path d="M1 3l20-2 2 20-20 2z" fill="#f8f8f8" /><path d="M1 3l20-2 .6 6-20 2z" fill="#e4483f" /><text x="11" y="7" transform="rotate(-5 11 7)" font-size="5" fill="#fff" text-anchor="middle">MAR</text><text x="12" y="20" transform="rotate(-5 12 20)" font-size="13" fill="#333" text-anchor="middle">15</text></svg></button>
        <button aria-label="Reminders"><svg viewBox="0 0 24 24"><path d="M1 3l20-2 2 21-20 2z" fill="#f8f8f8" /><path d="M8 7l10-1M8 12l11-1M9 16l11-1M9 20l11-1" stroke="#cfcfcf" /><circle cx="5" cy="7" r="1.500" fill="#f0883c" /><circle cx="5.500" cy="11.500" r="1.500" fill="#3c98e8" /><circle cx="6" cy="16" r="1.500" fill="#58c05c" /><circle cx="6.500" cy="20.500" r="1.500" fill="#b860d8" /></svg><em>2</em></button>
        <button aria-label="Notes"><svg viewBox="0 0 24 24"><path d="M1 2l20-2 2 22-20 2z" fill="#f7f5ee" /><path d="M1 2l20-2 .5 5-20 2z" fill="#f5c32c" /><path d="M3 11l18-2M3 15l18-2M4 19l18-2" stroke="#ddd9cc" stroke-width=".7" /></svg></button>
        <button aria-label="Maps"><svg viewBox="0 0 24 24"><path d="M1 4l20-2 2 19-20 2z" fill="#e8e2cc" /><path d="M1 4l8-1 1 7-8 3z" fill="#8cc874" /><path d="M12 2l9 0 1 8-8-2z" fill="#8cc874" /><path d="M3 20l6-7 6 9z" fill="#f2c84a" /><path d="M14 2l-4 20" stroke="#fff" stroke-width="3" /><circle cx="8" cy="14" r="4" fill="#2f7fe0" /><path d="M8 11l2 5-2-1-2 1z" fill="#fff" /><circle cx="19" cy="18" r="5" fill="#dce2e6" /><circle cx="19" cy="18" r="3" fill="none" stroke="#8d969c" stroke-width="1.400" /></svg></button>
        <button aria-label="Photos"><svg viewBox="0 0 24 24"><circle cx="12" cy="12" r="12" fill="#f4f2ef" /><g opacity=".88"><ellipse v-for="(c, i) in ['#f5a623', '#cfd23c', '#5dbb63', '#38b0a0', '#5a8fd8', '#9a6cc0', '#e0587c', '#f06a3c']" :key="c" cx="12" cy="6.500" rx="2.800" ry="4.600" :fill="c" :transform="`rotate(${i * 45} 12 12)`" /></g></svg></button>
        <button aria-label="Messages"><svg viewBox="0 0 24 24"><ellipse cx="12" cy="10" rx="12" ry="9" fill="#2e98f0" /><path d="M4 15l-2 6 8-4z" fill="#2e98f0" /><ellipse cx="17" cy="17" rx="7" ry="5.500" fill="#f4f7fa" /><path d="M21 20l2 4-6-2z" fill="#f4f7fa" /><path d="M13 17h1.500M16 17h1.500M19 17h1.500" stroke="#42607c" stroke-width="1.600" /></svg><em>2</em></button>
        <button aria-label="FaceTime"><svg viewBox="0 0 24 24"><rect y="1" width="22" height="21" rx="4" fill="#2fd24c" /><rect x="3" y="7" width="10" height="9" rx="1.500" fill="#fff" /><path d="M14 11l5-4v9l-5-4z" fill="#fff" /><circle cx="18.500" cy="17" r="5.500" fill="#eef3ee" /><path d="M16 14c0 3 2 5 5 6l1-2-2-1-1 1-2-2 1-1-1-2z" fill="#2bb845" /></svg></button>
        <button aria-label="Photo Booth"><svg viewBox="0 0 24 24"><path d="M1 3l21-2 1 19-20 3z" fill="#f0ecec" /><path d="M2 4l9-1v8l-8 1zM12 3l9-1 1 8-9 1zM3 13l8-1 1 8-8 2zM13 12l9-1v8l-8 1z" fill="#8d1824" /><path d="M5 6h4v5H5zM15 5h4v4h-4zM6 15h4v4H6z" fill="#2b1518" /><path d="M6 7h2v2H6zM16 6h2v2h-2zM7 15h2v2H7z" fill="#e2a88c" /><circle cx="18" cy="17" r="6" fill="#2a2a2e" /><circle cx="18" cy="17" r="3" fill="#565a68" /></svg></button>
        <button aria-label="iTunes"><svg viewBox="0 0 24 24"><circle cx="12" cy="12" r="12" fill="#b86cd8" /><path d="M1 8A12 12 0 0 1 22 6z" fill="#50b8f0" /><circle cx="12" cy="12" r="10.300" fill="#fafafc" /><path d="M9 17V7l8-2v10" fill="none" stroke="#d8509c" stroke-width="1.700" /><ellipse cx="7.500" cy="17" rx="2.500" ry="2" fill="#8c60e0" /><ellipse cx="15.500" cy="15.500" rx="2.500" ry="2" fill="#e85088" /></svg></button>
        <button aria-label="Books"><svg viewBox="0 0 24 24"><circle cx="12" cy="12" r="12" fill="#f4e3cf" /><circle cx="12" cy="12" r="10.800" fill="#f0801c" /><path d="M4.500 7c3-1 5-1 7 1v10c-2-2-4-2-7-1zM19.500 7c-3-1-5-1-7 1v10c2-2 4-2 7-1z" fill="#fff" /></svg></button>
        <button aria-label="App Store"><svg viewBox="0 0 24 24"><circle cx="12" cy="12" r="12" fill="#dfe8f2" /><circle cx="12" cy="12" r="10.800" fill="#1b84ee" /><path d="M13.500 5L7 17M10.500 5L17 17M4.500 14h15" stroke="#fff" stroke-width="2" fill="none" stroke-linecap="round" /></svg></button>
        <button aria-label="System Preferences"><svg viewBox="0 0 24 24"><rect y="1" width="24" height="22" rx="1" fill="#9aa1a6" /><circle cx="12" cy="12" r="9" fill="#4a4f54" /><circle cx="12" cy="12" r="7" fill="none" stroke="#c0c5c9" stroke-width="1.500" /><circle cx="12" cy="12" r="9" fill="none" stroke="#c6cacd" stroke-width="1.500" stroke-dasharray="1 1" /><path d="M12 12V5M12 12l6 4M12 12l-6 4" stroke="#c0c5c9" stroke-width="1.500" /><circle cx="12" cy="12" r="2.500" fill="#777d82" /></svg></button>
        <button class="run wide" aria-label="AutoCAD"><svg viewBox="0 0 24 24"><rect width="24" height="24" fill="#e9e0dd" /><path d="M11 3h5l4 17h-4l-1-5-5 1-3 5H3z" fill="#b81f2b" /><path d="M13 7l1.500 6-4 1z" fill="#e9e0dd" /><path d="M11 3l2 4-6 14H3z" fill="#d9363c" /></svg></button>
        <button class="run" aria-label="Spotify"><svg viewBox="0 0 24 24"><circle cx="12" cy="12" r="12" fill="#23cf5f" /><path d="M5 8c5-2 10-1 14 1M6 12c4-1 8-1 12 1M6.500 16c4-1 7-.5 10 1" fill="none" stroke="#16241a" stroke-width="2" stroke-linecap="round" /></svg></button>
        <span class="split"></span>
        <button aria-label="Download"><svg viewBox="0 0 24 24"><path d="M4 0h11l6 6v18H4z" fill="#f3f4f5" /><path d="M15 0l6 6h-6z" fill="#c9cdd0" /><circle cx="12" cy="13" r="5.500" fill="#2f93e6" /><path d="M16 9l-3 5-2-2z" fill="#f04a3c" /><path d="M8 17l3-5 2 2z" fill="#fff" /><path d="M6 22h13" stroke="#a5a8ab" stroke-width="1.200" /></svg></button>
        <button class="wide" aria-label="Minimised window"><svg viewBox="0 0 26 24"><rect y="4" width="26" height="15" rx="1" fill="#22252c" /><path d="M3 7h20M6 11h3M11 11h3M16 11h3M6 14h3M11 14h3M16 14h3" stroke="#6f8799" stroke-width="1.300" /><circle cx="21" cy="19" r="4.500" fill="#23cf5f" /><path d="M18.500 18c2-1 3-1 5 0M19 20c1-.5 3-.5 4 0" stroke="#123" fill="none" stroke-width=".9" /></svg></button>
        <button aria-label="Bin"><svg viewBox="0 0 24 24"><path d="M2 2h20l-3 21H5z" fill="#dcdcd9" /><ellipse cx="12" cy="2.500" rx="10" ry="2" fill="#f4f4f2" /><path d="M6 5l2 17M12 5v17M18 5l-2 17" stroke="#c8c8c4" stroke-width=".7" /></svg></button>
      </div>
    </footer>
  </div>
</template>

<style>
html, body { height: 100%; }
body { background: #2b1d16; }
#app { height: 100%; }
</style>

<style scoped>
.desk { display: flex; flex-direction: column; min-height: 100%; font: 6px/8px Inter, "Liberation Sans", sans-serif; color: #d6d6d6; overflow: hidden; }
button, input, select { font: inherit; color: inherit; background: none; border: 0; padding: 0; margin: 0; appearance: none; min-width: 0; outline: 0; }
h1, h2, ul, hr { margin: 0; padding: 0; font: inherit; list-style: none; border: 0; }
svg { display: block; flex: none; }
.down { flex: none; width: 0; height: 0; border: 2px solid transparent; border-top: 2px solid #b4b4b4; border-bottom: 0; }

.menubar { display: flex; align-items: stretch; height: 9px; background: #e3ebf4; color: #1c1d20; font: 6px/9px Roboto, "Liberation Sans", sans-serif; position: relative; z-index: 5; }
.m-apple { width: 6px; height: 6px; margin: 1px 8px 0 8px; }
.menus { display: flex; margin-left: -3px; }
.m { padding: 0 4px 0 3px; height: 9px; white-space: nowrap; }
.m.app { font-weight: 700; }
.m.on { background: #1767e0; color: #fff; }
.m-open { position: relative; }
.menu { position: absolute; display: flex; flex-direction: column; box-sizing: border-box; padding: 1px 0; background: #c3c6cb; color: #1e2023; box-shadow: 0 1px 3px rgba(0, 0, 0, .45); font-size: 6px; line-height: 7px; }
.menu.view { left: 0; top: 100%; width: 103px; height: 168px; border-radius: 0 0 2px 2px; }
.menu.render { left: 100%; top: -1px; width: 75px; height: 18px; border-radius: 0 0 2px 2px; }
.menu.light { left: 100%; top: -1px; width: 62px; height: 38px; border-radius: 0 2px 2px 2px; }
.menu li { position: relative; flex: 23 0 0; min-height: 0; }
.menu li.sep { flex: 14 0 0; display: flex; align-items: center; }
.menu li.sep::before { content: ""; width: 100%; height: 1px; background: #a9acb2; }
.menu li.hot { background: #0c62dc; }
.menu li.hot > .mi { color: #fff; }
.mi { display: flex; align-items: center; width: 100%; height: 100%; padding-right: 5px; text-align: left; white-space: nowrap; }
.tick { width: 8px; flex: none; text-align: center; font-size: 5px; }
.lab { flex: 1; }
.arr { width: 0; height: 0; border: 2px solid transparent; border-left: 4px solid currentColor; border-right: 0; }
.tray { margin-left: auto; display: flex; align-items: center; gap: 6px; padding-right: 9px; }
.tray svg { width: 7px; height: 7px; }
.time { margin: 0 3px; }

.window { flex: 1; display: flex; flex-direction: column; background: #484848; }
.chrome { height: 21px; background: #494949; }
.titlerow { display: grid; grid-template-columns: 1fr auto 1fr; height: 9px; align-items: center; }
.lights { display: flex; gap: 3px; padding-left: 3px; }
.lights button { width: 5px; height: 5px; border-radius: 50%; }
.red { background: #f4453f; }
.amber { background: #f2b02e; }
.green { background: #2dbd3e; }
.titlerow h1 { display: flex; align-items: center; gap: 1px; color: #dadada; font: 6px/8px Roboto, sans-serif; }
.titlerow h1 svg { width: 6px; height: 6px; }
.user { justify-self: end; display: flex; align-items: center; gap: 3px; height: 9px; padding: 0 3px; background: #363636; font: 5px/9px Inter, sans-serif; }
.user svg { width: 5px; height: 5px; }
.toolbar { display: flex; justify-content: center; gap: 20px; height: 10px; align-items: center; }
.group { display: flex; }
.group button { width: 13px; display: flex; justify-content: center; }
.group svg { width: 8px; height: 8px; }

.work { flex: 1; display: flex; min-height: 0; }
.tools { width: 74px; flex: none; display: flex; flex-direction: column; background: #4b4b4b; box-sizing: border-box; }
.tooltabs { display: flex; height: 9px; background: #3d3d3d; color: #7b7b7b; font-size: 5px; line-height: 9px; }
.tooltabs button { flex: 1; }
.tooltabs .on { background: #4b4b4b; color: #f2f2f2; font-weight: 500; }
.tooltabs .fold { flex: 0 0 8px; }
.palette { padding: 0 3px 3px 2px; border-bottom: 1px solid #414141; }
.palette.short { padding-bottom: 1px; }
.palette h2 { display: flex; align-items: center; gap: 2px; height: 8px; font: 5px/8px Inter, sans-serif; }
.palette h2 svg { width: 4px; height: 4px; margin-left: auto; }
.cells { display: grid; grid-template-columns: repeat(8, 1fr); grid-auto-rows: 9px; grid-auto-flow: row; }
.cells button { display: grid; place-items: center; }
.cells svg { width: 8px; height: 8px; }
.cells .big svg { width: 14px; height: 14px; }
.cells .big { grid-column: span 2; grid-row: span 2; }
.toolfoot { margin-top: auto; display: flex; gap: 6px; padding: 0 6px 3px; }
.toolfoot svg { width: 5px; height: 5px; margin-right: 2px; }

.center { flex: 1; min-width: 0; display: flex; flex-direction: column; }
.upper { flex: 1; display: flex; min-height: 0; }
.stage { flex: 1; min-width: 0; display: flex; flex-direction: column; }
.doctabs { height: 9px; display: flex; align-items: center; gap: 2px; background: #474747; color: #9a9a9a; font: 4px/9px Inter, sans-serif; }
.doctabs svg { width: 6px; height: 6px; margin-left: 2px; }
.doctabs svg + svg { width: 5px; height: 5px; }
.doctabs button { height: 9px; text-align: left; white-space: nowrap; overflow: hidden; }
.doctabs .t1 { width: 110px; padding-left: 2px; }
.doctabs .t2 { width: 39px; }
.doctabs .t3 { padding: 0 9px 0 2px; border-left: 1px solid #3b3b3b; border-right: 1px solid #3b3b3b; }
.canvas { flex: 1; min-height: 0; position: relative; display: flex; background: linear-gradient(#363a3e, #23272c 45%, #24282d); }
.model { width: 100%; height: 351px; }
.vp { font: 4px Inter, sans-serif; fill: #9ea2a6; }
.w { stroke: #b4bcc2; stroke-width: .6; opacity: .72; }
.w.t { opacity: .7; stroke: #bcc5cc; }
.r { stroke: #e60c10; stroke-width: .8; opacity: .8; }
.c { stroke: #18a2a4; stroke-width: .8; }
.f { stroke: #eef2f4; stroke-width: .8; }
.face { font: 700 4px Inter, sans-serif; fill: #4c4f53; text-anchor: middle; }
.dir { font: 700 8px Inter, sans-serif; fill: #b3b7ba; text-anchor: middle; }
.dir.s { font-size: 5px; }
.wcs { font: 4px Inter, sans-serif; fill: #c5ced3; text-anchor: middle; }
.cmd { position: absolute; left: 0; right: 0; bottom: 0; width: 199px; margin: 0 auto; box-sizing: border-box; height: 9px; display: flex; align-items: center; background: #3b3b3b; color: #a5a5a5; font: 5px/9px "Open Sans", sans-serif; }
.cmd span { display: flex; align-items: center; gap: 1px; width: 15px; box-sizing: border-box; padding-left: 3px; border-right: 1px solid #484848; }
.cmd input { flex: 1; padding-left: 2px; }
.cmd input::placeholder { color: #9e9e9e; font-style: italic; opacity: 1; }
.cmd .dot { width: 2px; height: 2px; margin-right: 2px; background: #999; }

.side { width: 95px; box-sizing: border-box; flex: none; border-left: 1px solid #6a6a6a; background: #494949; font: 5px/7px "Open Sans", sans-serif; }
.sidetabs { display: flex; height: 9px; background: #3e3e3e; }
.sidetabs button { width: 21px; display: grid; place-items: center; }
.sidetabs .on { background: #494949; }
.sidetabs svg { width: 6px; height: 6px; }
.sidetabs span { margin-left: auto; padding-right: 4px; }
.sidebody { padding: 0 4px; }
.sidebody h2 { display: flex; align-items: center; height: 8px; font: 600 5px/8px "Open Sans", sans-serif; }
.sidebody h2 svg { width: 6px; height: 6px; margin-left: 3px; }
.sidebody h2 svg:only-of-type { margin-left: auto; }
.ltools { display: flex; justify-content: space-between; align-items: center; height: 17px; padding: 0 1px; }
.ltools svg { width: 7px; height: 7px; }
.pick { display: flex; align-items: center; box-sizing: border-box; height: 9px; margin-bottom: 2px; padding: 0 3px 0 2px; background: #575757; box-shadow: 0 1px 0 #3d3d3d; }
.pick select { flex: 1; height: 9px; }
.pick svg { width: 5px; height: 5px; margin: 0 1px; }
.pick.lay select { padding-left: 2px; }
.dim { opacity: .4; }
.hide { display: flex; align-items: center; gap: 4px; height: 10px; padding-left: 1px; color: #a2a2a2; }
table { width: 100%; border-collapse: collapse; table-layout: fixed; background: #454545; }
.c8 { width: 8px; }
.c10 { width: 10px; }
.c14 { width: 14px; }
th, td { padding: 0; height: 8px; font: 5px/8px "Open Sans", sans-serif; text-align: left; overflow: hidden; }
th { background: #3b3b3b; }
th svg, td svg { width: 5px; height: 5px; margin-left: 2px; }
th.name { border-bottom: 1px solid #3a84dc; }
td hr { height: 1px; width: 12px; background: #c8c8c8; }
tr.sel { background: #747474; }
.scroll { height: 3px; width: 76px; margin: 7px 0 3px 1px; background: #5a5a5a; border-radius: 1px; }
.lfoot { display: flex; gap: 6px; align-items: center; height: 9px; padding: 0 3px; }
.lfoot svg { width: 6px; height: 6px; }
.lfoot span { flex: 1; }
.find { display: flex; align-items: center; justify-content: center; height: 8px; background: #fff; color: #777; gap: 2px; }
.find svg { width: 5px; height: 5px; opacity: .6; }
.find input { width: 46px; height: 8px; color: #555; }
.find input::placeholder { color: #9d9d9d; opacity: 1; }
.propbox { margin-top: 2px; border-top: 1px solid #3a3a3a; }
.seg { margin-left: auto; display: flex; height: 6px; line-height: 6px; font-size: 4px; font-weight: 400; }
.seg button { width: 11px; background: #3d3d3d; color: #777; }
.seg .on { background: #606060; color: #eee; }
.space { height: 9px; margin: 2px 0 2px; background: #4e4e4e; color: #787878; }
.props { display: grid; grid-template-columns: 36px 42px; column-gap: 6px; grid-auto-rows: 1fr; height: 147px; }
.props label { text-align: right; color: #b0b0b0; white-space: nowrap; line-height: 9px; }
.val { display: flex; align-items: center; height: 8px; background: #404040; padding: 0 2px 0 1px; color: #ddd; box-sizing: border-box; }
.val.sel { background: #535353; }
.val.off { background: #474747; color: #777; }
.val select, .val input { flex: 1; width: 100%; height: 8px; }
.val > svg { width: 5px; height: 5px; margin: 0 3px 0 2px; }
.val hr { width: 12px; height: 1px; background: #ccc; margin: 0 5px 0 2px; }
.slide input { text-align: right; padding-right: 3px; border-left: 1px solid #3f78d0; }
.end { display: flex; align-items: center; gap: 2px; height: 8px; margin-right: -1px; padding-left: 1px; background: #4e4e4e; }
.end svg { width: 6px; height: 6px; }

.status { display: flex; align-items: center; height: 10px; background: #464646; color: #8d8d8d; font: 5px/10px "Open Sans", sans-serif; }
.status .lt { height: 10px; padding: 0 3px; }
.status .lt.on { background: #686868; color: #f0f0f0; font-weight: 600; padding: 0 5px; }
.status > svg { width: 5px; height: 5px; margin: 0 1px 0 3px; }
.coords { margin-left: auto; white-space: nowrap; }
.sicons { display: flex; align-items: center; gap: 3px; padding: 0 3px; }
.sicons svg { width: 6px; height: 6px; }
.lit { display: grid; place-items: center; width: 8px; height: 8px; margin-right: -2px; background: #4a7db4; }
.lit + svg { margin-left: 2px; }
.ratio { display: flex; align-items: center; gap: 1px; font-size: 4px; }

.wall { height: 32px; flex: none; padding: 0 50px; background: repeating-linear-gradient(2deg, rgba(0, 0, 0, .25) 0 1px, transparent 1px 3px), linear-gradient(90deg, #4a2a20 0, #3b261e 6%, #6a4820 93%, #3c3210 96%, #5a3c0c 100%); }
.dock { display: flex; height: 32px; padding: 0 1px; background: linear-gradient(90deg, #b97465 0, #cf7a5e 14%, #d67a50 28%, #e87f2a 40%, #ec8518 55%, #e78a18 75%, #b98228 85%, #8f7b3c 95%, #a07a38 100%); }
.dock button { flex: 1; position: relative; display: flex; justify-content: center; padding-top: 4px; }
.dock svg { width: 22px; height: 22px; }
.dock .wide svg { width: 24px; height: 24px; margin-top: -1px; }
.dock text { font-family: Inter, sans-serif; }
.split { flex: none; width: 12px; background: linear-gradient(#8a6a2c, #8a6a2c) 50% 4px / 1px 24px no-repeat; }
.run::after { content: ""; position: absolute; left: 50%; bottom: 1px; width: 2px; height: 2px; margin-left: -1px; border-radius: 50%; background: #2a1208; }
.dock em { position: absolute; right: 0; top: 2px; width: 9px; height: 9px; border-radius: 50%; background: #ee4238; color: #fff; font: 6px/9px Inter, sans-serif; text-align: center; }
</style>
